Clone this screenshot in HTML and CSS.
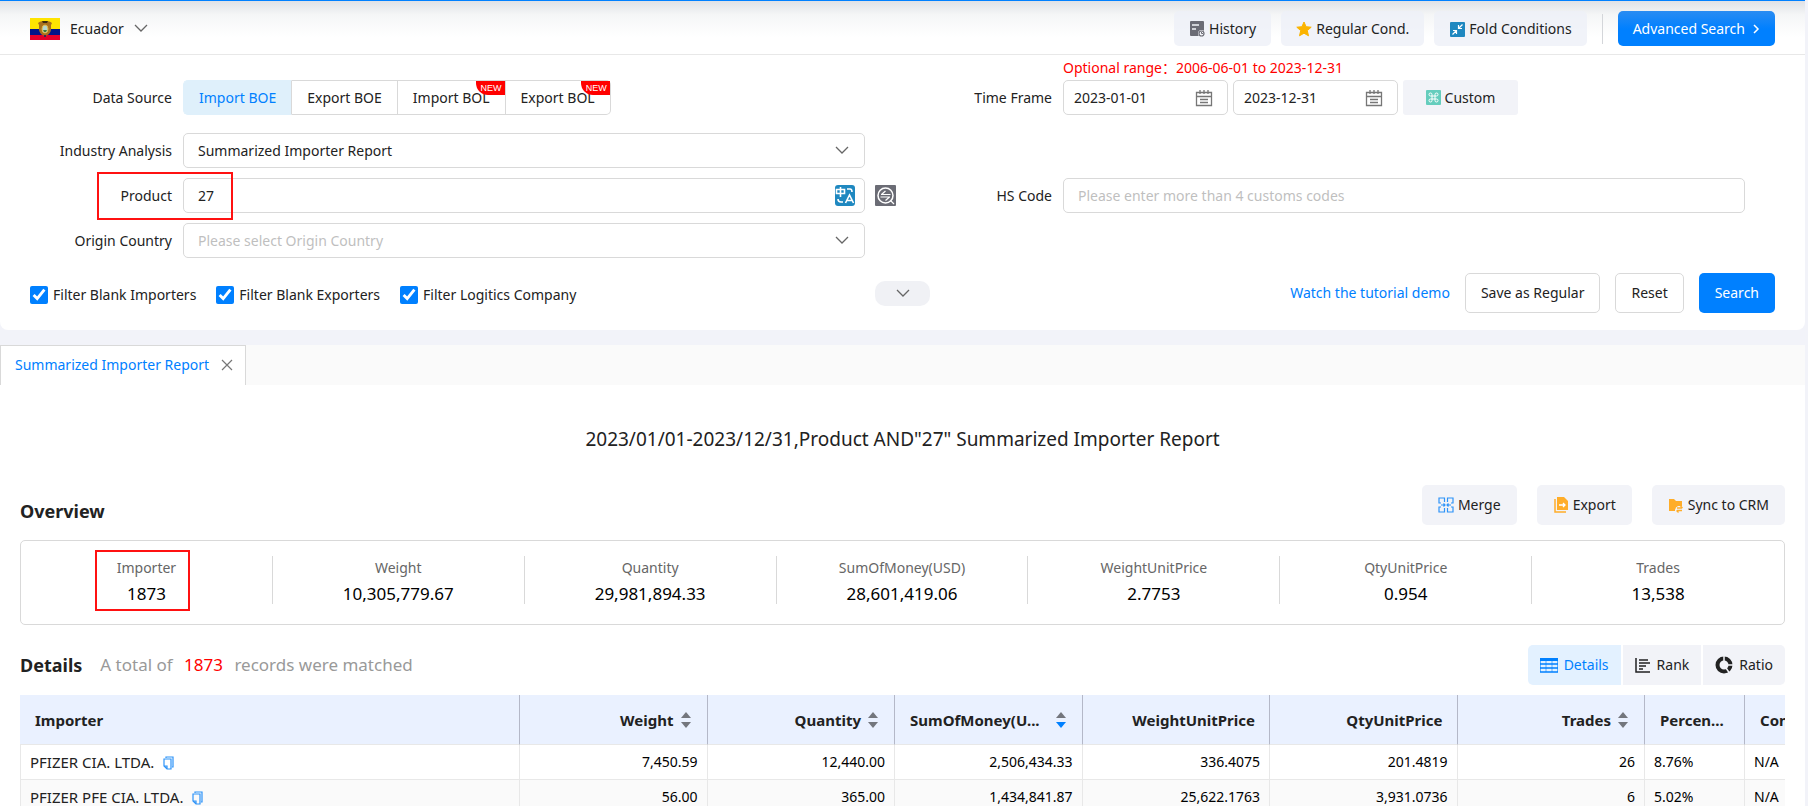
FILE: index.html
```html
<!DOCTYPE html>
<html lang="en">
<head>
    <meta charset="UTF-8">
    <meta name="viewport" content="width=device-width, initial-scale=1.0">
    <title>Summarized Importer Report</title>
    <link rel="stylesheet" href="styles.css">
</head>
<body>
    <section class="panel">
        <header class="topbar">
            <button type="button" class="country">
                <svg class="flag" width="30" height="22" viewBox="0 0 30 22">
                    <rect width="30" height="11" fill="#ffe400"/>
                    <rect y="11" width="30" height="6" fill="#001489"/>
                    <rect y="17" width="30" height="5" fill="#e4002b"/>
                    <path d="M8 5q3-3 7-1q4-2 7 1l-1 2v5q-1 5-6 6q-5-1-6-6V7z" fill="#a8701c"/>
                    <path d="M12 3h6l-1 2h-4z" fill="#3a2a10"/>
                    <ellipse cx="15" cy="11" rx="3" ry="4" fill="#b5d8d0" stroke="#e0b84a"/>
                    <path d="M13 12h4l-1 2h-2z" fill="#3d7a3a"/>
                    <path d="M14 17h2v2h-2z" fill="#3a2a50"/>
                </svg>
                Ecuador
                <svg class="chevron" width="14" height="9" viewBox="0 0 14 9"><path d="M1 1l6 6 6-6"/></svg>
            </button>
            <div class="topbar-actions">
                <button type="button" class="soft-btn">
                    <svg width="16" height="16" viewBox="0 0 16 16">
                        <rect x="1" width="14" height="15" rx="1" fill="#6b6c75"/>
                        <path d="M3 4h7M3 8h4" stroke="#f2f3f8" stroke-width="1.500"/>
                        <circle cx="12.500" cy="12.500" r="3.500" fill="#f2f3f8"/>
                        <circle cx="12.500" cy="12.500" r="2.500" fill="none" stroke="#6b6c75" stroke-width="1.200"/>
                        <path d="M12.500 11v1.500H14" fill="none" stroke="#6b6c75"/>
                    </svg>
                    History
                </button>
                <button type="button" class="soft-btn">
                    <svg width="16" height="16" viewBox="0 0 16 16"><path d="M8 1l2.100 4.700 5.100.5-3.900 3.400 1.200 5.200L8 12.200l-4.500 2.600 1.200-5.200L.8 6.200l5.100-.5z" fill="#fbb400" stroke="#fbb400" stroke-linejoin="round"/></svg>
                    Regular Cond.
                </button>
                <button type="button" class="soft-btn">
                    <svg width="16" height="16" viewBox="0 0 16 16">
                        <rect x="1" y="1" width="15" height="15" rx="1" fill="#1f88c0"/>
                        <path d="M13.500 3.500l-4 4M9.500 4v3.500H13M3.500 13.500l4-4M4 9.500h3.500V13" fill="none" stroke="#fff" stroke-width="1.200"/>
                    </svg>
                    Fold Conditions
                </button>
                <span class="divider"></span>
                <button type="button" class="blue-btn advanced">
                    Advanced Search
                    <svg width="7" height="10" viewBox="0 0 7 10"><path d="M1 1l4 4-4 4" fill="none" stroke="#fff" stroke-width="1.500"/></svg>
                </button>
            </div>
        </header>

        <form class="search-form">
            <div class="form-grid">
                <div class="field source-field">
                    <span class="field-label">Data Source</span>
                    <div class="segments">
                        <button type="button" class="segment active">Import BOE</button>
                        <button type="button" class="segment">Export BOE</button>
                        <button type="button" class="segment">Import BOL<span class="new">NEW</span></button>
                        <button type="button" class="segment">Export BOL<span class="new">NEW</span></button>
                    </div>
                </div>
                <div class="field time-field">
                    <label class="field-label" for="dateFrom">Time Frame</label>
                    <div class="time-box">
                        <p class="range-note">Optional range：2006-06-01 to 2023-12-31</p>
                        <div class="dates">
                            <div class="control">
                                <input type="text" id="dateFrom" value="2023-01-01">
                                <svg class="control-icon" width="18" height="18" viewBox="0 0 18 18"><path d="M1.500 3.500h15v13h-15zM1.500 7.500h15M5 1v4M9 1v4M13 1v4M5 10.500h8M5 13.500h8"/></svg>
                            </div>
                            <div class="control">
                                <input type="text" id="dateTo" value="2023-12-31" aria-label="Time Frame end">
                                <svg class="control-icon" width="18" height="18" viewBox="0 0 18 18"><path d="M1.500 3.500h15v13h-15zM1.500 7.500h15M5 1v4M9 1v4M13 1v4M5 10.500h8M5 13.500h8"/></svg>
                            </div>
                            <button type="button" class="soft-btn custom">
                                <svg width="15" height="15" viewBox="0 0 15 15">
                                    <rect width="15" height="15" rx="1" fill="#65cdbd"/>
                                    <path d="M6 6V4.500A1.500 1.500 0 1 0 4.500 6h6A1.500 1.500 0 1 0 9 4.500v6A1.500 1.500 0 1 0 10.500 9h-6A1.500 1.500 0 1 0 6 10.500z" fill="none" stroke="#fff"/>
                                </svg>
                                Custom
                            </button>
                        </div>
                    </div>
                </div>

                <div class="field">
                    <label class="field-label" for="analysis">Industry Analysis</label>
                    <div class="control">
                        <select id="analysis"><option>Summarized Importer Report</option></select>
                        <svg class="chevron control-icon" width="14" height="9" viewBox="0 0 14 9"><path d="M1 1l6 6 6-6"/></svg>
                    </div>
                </div>
                <div class="field"></div>

                <div class="field product-field">
                    <label class="field-label" for="product">Product</label>
                    <div class="control">
                        <input type="text" id="product" value="27">
                        <svg class="control-icon translate" width="20" height="21" viewBox="0 0 20 21">
                            <rect width="20" height="21" rx="3" fill="#1f88c0"/>
                            <path d="M1.500 4.500h8v4h-8zM5.500 2v10M12 4h3q2 0 2 3M3 14q0 3 3 3h2M10.500 18l4-8 4 8M12 15.500h5" fill="none" stroke="#fff" stroke-width="1.600"/>
                        </svg>
                    </div>
                    <button type="button" class="icon-btn" aria-label="Synonyms">
                        <svg width="21" height="21" viewBox="0 0 21 21">
                            <rect width="21" height="21" rx="1" fill="#6b6c75"/>
                            <circle cx="10.500" cy="10.500" r="7.500" fill="none" stroke="#fff" stroke-width="1.500"/>
                            <path d="M15.500 15.500l3.500 3.500M6 9.500h9.500M6.500 9.500L10.500 6M5.500 12H15M14.500 12l-4 3.500" fill="none" stroke="#fff" stroke-width="1.200"/>
                        </svg>
                    </button>
                    <span class="highlight"></span>
                </div>
                <div class="field">
                    <label class="field-label" for="hsCode">HS Code</label>
                    <div class="control"><input type="text" id="hsCode" placeholder="Please enter more than 4 customs codes"></div>
                </div>

                <div class="field">
                    <label class="field-label" for="origin">Origin Country</label>
                    <div class="control">
                        <select id="origin" class="empty"><option>Please select Origin Country</option></select>
                        <svg class="chevron control-icon" width="14" height="9" viewBox="0 0 14 9"><path d="M1 1l6 6 6-6"/></svg>
                    </div>
                </div>
            </div>

            <div class="form-footer">
                <div class="checks">
                    <label><input type="checkbox" checked>Filter Blank Importers</label>
                    <label><input type="checkbox" checked>Filter Blank Exporters</label>
                    <label><input type="checkbox" checked>Filter Logitics Company</label>
                </div>
                <button type="button" class="expand" aria-label="More conditions">
                    <svg class="chevron" width="14" height="9" viewBox="0 0 14 9"><path d="M1 1l6 6 6-6"/></svg>
                </button>
                <div class="form-actions">
                    <a href="#">Watch the tutorial demo</a>
                    <button type="button" class="line-btn">Save as Regular</button>
                    <button type="reset" class="line-btn">Reset</button>
                    <button type="submit" class="blue-btn">Search</button>
                </div>
            </div>
        </form>
    </section>

    <main class="report">
        <nav class="tabs">
            <div class="tab">
                <a href="#">Summarized Importer Report</a>
                <button type="button" aria-label="Close">
                    <svg width="12" height="12" viewBox="0 0 12 12"><path d="M1 1l10 10M11 1L1 11" stroke="#777" stroke-width="1.200"/></svg>
                </button>
            </div>
        </nav>

        <div class="report-body">
            <h1>2023/01/01-2023/12/31,Product AND"27" Summarized Importer Report</h1>

            <div class="section-head overview-head">
                <h2>Overview</h2>
                <div class="tools">
                    <button type="button" class="soft-btn">
                        <svg width="16" height="16" viewBox="0 0 16 16"><path d="M6.500 5V1H1v5h2M6.500 11v4H1v-5h2M9.500 5V1H15v5h-2M9.500 11v4H15v-5h-2M3 8h4M5.500 6.500L7 8 5.500 9.500M13 8H9M10.500 6.500L9 8l1.500 1.500" fill="none" stroke="#2d93f8" stroke-width="1.200"/></svg>
                        Merge
                    </button>
                    <button type="button" class="soft-btn">
                        <svg width="16" height="16" viewBox="0 0 16 16">
                            <path d="M4 0h7l4 4v9H4z" fill="#ffad29"/>
                            <path d="M2 2v13h11" fill="none" stroke="#ffad29" stroke-width="1.500"/>
                            <path d="M6 8h6M10 6l2 2-2 2" fill="none" stroke="#fff" stroke-width="1.300"/>
                        </svg>
                        Export
                    </button>
                    <button type="button" class="soft-btn">
                        <svg width="16" height="16" viewBox="0 0 16 16">
                            <path d="M1 2h5l2 2h6v5h-4q-3 1-3 5H1z" fill="#ffad29"/>
                            <path d="M9 11h5M12.500 9l2 2M14 13.500H9M10.500 15.500l-2-2" fill="none" stroke="#ffad29" stroke-width="1.300"/>
                        </svg>
                        Sync to CRM
                    </button>
                </div>
            </div>

            <dl class="overview">
                <div class="stat marked"><dt>Importer</dt><dd>1873</dd><span class="highlight"></span></div>
                <div class="stat"><dt>Weight</dt><dd>10,305,779.67</dd></div>
                <div class="stat"><dt>Quantity</dt><dd>29,981,894.33</dd></div>
                <div class="stat"><dt>SumOfMoney(USD)</dt><dd>28,601,419.06</dd></div>
                <div class="stat"><dt>WeightUnitPrice</dt><dd>2.7753</dd></div>
                <div class="stat"><dt>QtyUnitPrice</dt><dd>0.954</dd></div>
                <div class="stat"><dt>Trades</dt><dd>13,538</dd></div>
            </dl>

            <div class="section-head">
                <h2>Details</h2>
                <p class="matched">A total of <span>1873</span> records were matched</p>
                <div class="views">
                    <button type="button" class="soft-btn active">
                        <svg width="18" height="15" viewBox="0 0 18 15"><path d="M0 0h18v3H0z" fill="#0080ff"/><path d="M0 6h18M0 10h18M0 14h18" stroke="#0080ff" stroke-width="1.500"/><path d="M.5 3v11M6 3v11M12 3v11M17.500 3v11" stroke="#0080ff" stroke-width=".6"/></svg>
                        Details
                    </button>
                    <button type="button" class="soft-btn">
                        <svg width="16" height="15" viewBox="0 0 16 15"><path d="M1 0v14h14M4 2h9M4 5h11M4 8h7M4 11h4" fill="none" stroke="#222" stroke-width="1.500"/></svg>
                        Rank
                    </button>
                    <button type="button" class="soft-btn">
                        <svg width="18" height="18" viewBox="0 0 18 18"><circle cx="9" cy="9" r="6.500" fill="none" stroke="#222" stroke-width="4"/><path d="M9 9V0M9 9h9M9 9l6 9" stroke="#f2f3f8" stroke-width="1.500"/></svg>
                        Ratio
                    </button>
                </div>
            </div>

            <div class="table-wrap">
                <table>
                    <colgroup>
                        <col class="col-name"><col class="col-num"><col class="col-num"><col class="col-num"><col class="col-num"><col class="col-num"><col class="col-num"><col class="col-small"><col class="col-small">
                    </colgroup>
                    <thead>
                        <tr>
                            <th class="text">Importer</th>
                            <th><span class="sortable">Weight<svg width="10" height="16" viewBox="0 0 10 16"><path d="M5 0l5 6H0z"/><path d="M5 16l5-6H0z"/></svg></span></th>
                            <th><span class="sortable">Quantity<svg width="10" height="16" viewBox="0 0 10 16"><path d="M5 0l5 6H0z"/><path d="M5 16l5-6H0z"/></svg></span></th>
                            <th><span class="sortable clipped">SumOfMoney(U...<svg width="10" height="16" viewBox="0 0 10 16"><path d="M5 0l5 6H0z"/><path class="on" d="M5 16l5-6H0z"/></svg></span></th>
                            <th>WeightUnitPrice</th>
                            <th>QtyUnitPrice</th>
                            <th><span class="sortable">Trades<svg width="10" height="16" viewBox="0 0 10 16"><path d="M5 0l5 6H0z"/><path d="M5 16l5-6H0z"/></svg></span></th>
                            <th class="text">Percen...</th>
                            <th class="text">Contact</th>
                        </tr>
                    </thead>
                    <tbody>
                        <tr>
                            <td class="text name">PFIZER CIA. LTDA.<svg class="copy" width="11" height="14" viewBox="0 0 11 14"><path d="M3 2V1h7v10H9M1 3h7v10H4l-3-3zM1 10h3v3"/></svg></td>
                            <td>7,450.59</td><td>12,440.00</td><td>2,506,434.33</td><td>336.4075</td><td>201.4819</td><td>26</td>
                            <td class="text">8.76%</td><td class="text">N/A</td>
                        </tr>
                        <tr>
                            <td class="text name">PFIZER PFE CIA. LTDA.<svg class="copy" width="11" height="14" viewBox="0 0 11 14"><path d="M3 2V1h7v10H9M1 3h7v10H4l-3-3zM1 10h3v3"/></svg></td>
                            <td>56.00</td><td>365.00</td><td>1,434,841.87</td><td>25,622.1763</td><td>3,931.0736</td><td>6</td>
                            <td class="text">5.02%</td><td class="text">N/A</td>
                        </tr>
                    </tbody>
                </table>
            </div>
        </div>
    </main>
</body>
</html>
```
FILE: styles.css
```css
* {
    box-sizing: border-box;
}
body {
    margin: 0;
    padding-right: 3px;
    height: 100vh;
    overflow: hidden;
    background-color: #f2f3f9;
    font-family: "Noto Sans", "Noto Sans CJK SC", sans-serif;
    font-size: 14px;
    line-height: 20px;
    color: #222;
}
button, input, select {
    font: inherit;
    color: inherit;
}
button {
    display: flex;
    align-items: center;
    justify-content: center;
    padding: 0;
    border: none;
    background: none;
    white-space: nowrap;
    cursor: pointer;
}
a {
    color: #0080ff;
    text-decoration: none;
}
svg {
    flex: none;
}
h1, h2, p, dl, dd {
    margin: 0;
}

/* Search panel */
.panel {
    border-top: 1px solid #0080ff;
    border-radius: 0 0 8px 8px;
    background: linear-gradient(#dfe1e6, #f5f6f7 14px, #fff 36px);
}
.topbar {
    display: flex;
    align-items: center;
    justify-content: space-between;
    height: 54px;
    padding: 2px 30px 0;
    border-bottom: 1px solid #e8e8e8;
}
.country {
    gap: 10px;
}
.chevron path {
    fill: none;
    stroke: #666;
    stroke-width: 1.3;
}
.topbar-actions {
    display: flex;
    align-items: center;
    gap: 10px;
}
.soft-btn {
    height: 40px;
    padding: 0 16px;
    gap: 4px;
    border-radius: 5px;
    background-color: #f2f3f8;
}
.topbar .soft-btn, .topbar .blue-btn {
    height: 35px;
    padding: 0 15px;
}
.topbar .soft-btn {
    background-color: rgba(238, 240, 247, 0.8);
}
.divider {
    width: 1px;
    height: 30px;
    margin: 0 5px;
    background-color: #d4d6da;
}
.blue-btn {
    height: 40px;
    padding: 0 16px;
    border-radius: 5px;
    background-color: #0080ff;
    color: #fff;
}
.advanced {
    gap: 8px;
    background: linear-gradient(#2a8cf2, #0080ff 18px);
}

.search-form {
    padding: 5px 15px 17px 30px;
}
.form-grid {
    display: grid;
    grid-template-columns: 1fr 1fr;
    row-gap: 10px;
}
.field {
    position: relative;
    display: grid;
    grid-template-columns: 142px 1fr 45px;
    align-items: center;
}
.field-label {
    text-align: right;
}
.field > .control, .segments, .time-box {
    margin-left: 11px;
}
.source-field, .time-field {
    align-items: end;
    margin-bottom: 8px;
}
.source-field .field-label, .time-field .field-label {
    line-height: 35px;
}
.segments, .dates {
    display: flex;
}
.segment {
    position: relative;
    height: 35px;
    padding: 0 15px;
    border: 1px solid #d9d9d9;
    border-left: none;
}
.segment.active {
    border: 1px solid #dff0fb;
    border-right-color: #d9d9d9;
    border-radius: 5px 0 0 5px;
    background-color: #dff0fb;
    color: #0080ff;
}
.segment:last-child {
    border-radius: 0 5px 5px 0;
}
.new {
    position: absolute;
    top: 0;
    right: 0;
    padding: 0 3px 0 5px;
    border-radius: 0 0 0 12px;
    background-color: #f00;
    color: #fff;
    font-family: "Liberation Sans", sans-serif;
    font-size: 9px;
    line-height: 14px;
}
.range-note {
    line-height: 16px;
    margin-bottom: 4px;
    color: #f00;
}
.control {
    position: relative;
}
.control input, .control select {
    display: block;
    width: 100%;
    height: 35px;
    padding: 0 14px;
    border: 1px solid #d9d9d9;
    border-radius: 5px;
    background-color: #fff;
    appearance: none;
    outline: none;
}
.control select.empty, .control input::placeholder {
    color: #bfbfbf;
}
.control-icon {
    position: absolute;
    top: 0;
    bottom: 0;
    right: 16px;
    margin: auto 0;
    pointer-events: none;
}
.dates {
    gap: 5px;
}
.dates .control {
    width: 165px;
}
.dates .control input {
    padding: 0 10px;
}
.dates .control-icon {
    right: 15px;
}
.dates .control-icon path {
    fill: none;
    stroke: #777;
    stroke-width: 1.3;
}
.custom {
    height: 35px;
    width: 115px;
    border-radius: 3px;
}
.translate {
    right: 10px;
}
.icon-btn {
    justify-self: start;
    margin-left: 10px;
}
.highlight {
    position: absolute;
    border: 2px solid #f11;
}
.product-field .highlight {
    left: 67px;
    top: -6px;
    width: 136px;
    height: 48px;
}

.form-footer {
    display: grid;
    grid-template-columns: 1fr auto 1fr;
    align-items: center;
    margin-top: 15px;
    padding-right: 15px;
}
.checks {
    display: flex;
    gap: 20px;
    padding-top: 4px;
    white-space: nowrap;
}
.checks label {
    display: flex;
    align-items: center;
    gap: 5px;
}
.checks input {
    width: 18px;
    height: 18px;
    margin: 0;
    accent-color: #0080ff;
}
.expand {
    width: 55px;
    height: 25px;
    border-radius: 10px;
    background-color: #f0f1f5;
}
.form-actions {
    display: flex;
    align-items: center;
    justify-content: flex-end;
    gap: 15px;
}
.line-btn {
    height: 40px;
    padding: 0 15px;
    border: 1px solid #d9d9d9;
    border-radius: 5px;
    background-color: #fff;
}

/* Report */
.report {
    margin-top: 15px;
    background-color: #fff;
}
.tabs {
    display: flex;
    background-color: #fafafa;
}
.tab {
    display: flex;
    align-items: center;
    gap: 12px;
    height: 40px;
    padding: 0 12px 2px 14px;
    border: 1px solid #d9d9d9;
    border-bottom: none;
    background-color: #fff;
}
.report-body {
    padding: 40px 20px 0;
}
h1 {
    margin-bottom: 32px;
    font-size: 19px;
    font-weight: normal;
    line-height: 28px;
    text-align: center;
}
.section-head {
    display: flex;
    align-items: center;
    height: 40px;
}
.overview-head {
    align-items: flex-end;
}
h2 {
    font-size: 18px;
    font-weight: 700;
    line-height: 28px;
}
.tools, .views {
    display: flex;
    margin-left: auto;
}
.tools {
    gap: 20px;
}
.views {
    gap: 2px;
}
.views .soft-btn {
    padding: 0 12px;
    gap: 6px;
    border-radius: 0;
}
.views .soft-btn:first-child {
    border-radius: 5px 0 0 5px;
}
.views .soft-btn:last-child {
    border-radius: 0 5px 5px 0;
}
.views .active {
    background-color: #e3f1ff;
    color: #0080ff;
}
.overview {
    display: grid;
    grid-template-columns: repeat(7, 1fr);
    margin: 15px 0 20px;
    padding: 15px 0 20px;
    border: 1px solid #d9d9d9;
    border-radius: 5px;
}
.stat {
    position: relative;
    height: 48px;
    text-align: center;
}
.stat:not(:last-child) {
    border-right: 1px solid #d9d9d9;
}
.stat dt {
    line-height: 24px;
    color: #666;
}
.stat dd {
    font-size: 17px;
    line-height: 28px;
    color: #000;
}
.stat .highlight {
    left: 50%;
    top: -6px;
    width: 95px;
    height: 61px;
    margin-left: -51px;
}
.matched {
    margin-left: 18px;
    font-size: 17px;
    color: #999;
}
.matched span {
    margin: 0 7px;
    color: #f00;
}

.table-wrap {
    margin-top: 10px;
    overflow: hidden;
}
table {
    width: 1825px;
    min-width: 100%;
    table-layout: fixed;
    border-collapse: separate;
    border-spacing: 0;
}
.col-name {
    width: 500px;
}
.col-small {
    width: 100px;
}
th, td {
    text-align: right;
    white-space: nowrap;
}
th {
    height: 50px;
    padding: 0 14px 0 15px;
    border-right: 1px solid #b4b8c8;
    border-bottom: 1px solid #e8e8e8;
    background-color: #eaf1ff;
    font-size: 15px;
    font-weight: 700;
}
td {
    height: 35px;
    padding: 0 9px;
    border-right: 1px solid #e8e8e8;
    border-bottom: 1px solid #e8e8e8;
    color: #000;
}
.name {
    border-left: 1px solid #e8e8e8;
    font-size: 15px;
    color: #222;
}
tbody tr:nth-child(even) {
    background-color: #fafafa;
}
.text {
    text-align: left;
}
.sortable {
    display: inline-flex;
    align-items: center;
    gap: 7px;
    padding-right: 2px;
}
.sortable.clipped {
    display: flex;
    justify-content: space-between;
}
.sortable path {
    fill: #73767d;
}
.sortable .on {
    fill: #0080ff;
}
.copy {
    margin-left: 9px;
    vertical-align: -2px;
}
.copy path {
    fill: none;
    stroke: #2d93f8;
    stroke-width: 1.2;
}
```
